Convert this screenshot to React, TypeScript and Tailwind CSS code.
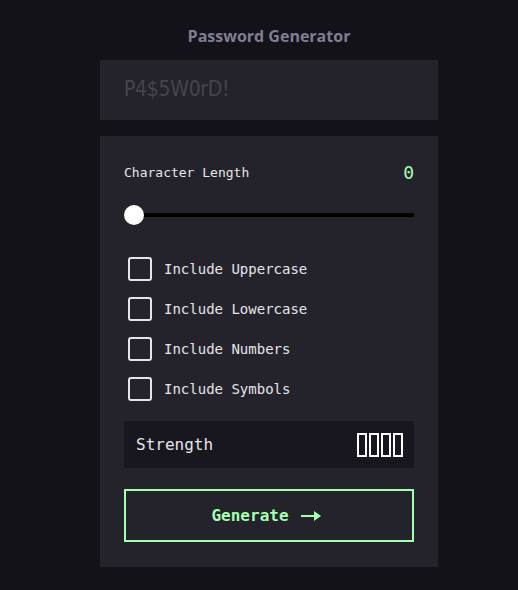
import React from "react";

const mono = { fontFamily: '"DejaVu Sans Mono", "Liberation Mono", monospace' };

function Checkbox({ label }: { label: string }) {
  return (
    <div className="flex items-center gap-3 h-6 pl-1">
      <div className="w-6 h-6 border-2 border-[#E6E5EA] rounded-[3px]" />
      <span className="text-[14px] text-[#E6E5EA]" style={mono}>{label}</span>
    </div>
  );
}

export default function App() {
  return (
    <div className="min-h-[590px] w-full bg-[#131219] flex flex-col items-center pt-[26px] pl-5">
      <h1
        className="text-[16px] font-bold text-[#817D92] leading-5"
        style={{ fontFamily: '"Open Sans", sans-serif' }}
      >
        Password Generator
      </h1>
      <div className="mt-[14px] w-[338px] h-[60px] bg-[#24232C] flex items-center px-6">
        <span
          className="text-[21px] text-[#45444F]"
          style={{ fontFamily: '"DejaVu Sans Condensed", "DejaVu Sans", sans-serif', letterSpacing: "-0.3px" }}
        >
          P4$5W0rD!
        </span>
      </div>
      <div className="mt-4 w-[338px] bg-[#24232C] px-6 pt-6 pb-[25px] flex flex-col">
        <div className="flex items-center justify-between h-6">
          <span className="text-[13px] text-[#E6E5EA] pt-[2px]" style={mono}>Character Length</span>
          <span className="text-[18px] text-[#A4FFAF]" style={mono}>0</span>
        </div>
        <div className="relative mt-[21px] h-5 flex items-center">
          <div className="w-full h-1 bg-black" />
          <div className="absolute left-0 top-0 w-5 h-5 rounded-full bg-white" />
        </div>
        <div className="mt-8 flex flex-col gap-4">
          <Checkbox label="Include Uppercase" />
          <Checkbox label="Include Lowercase" />
          <Checkbox label="Include Numbers" />
          <Checkbox label="Include Symbols" />
        </div>
        <div className="mt-5 h-[47px] bg-[#18171F] flex items-center justify-between pl-3 pr-[11px]">
          <span className="text-[16px] text-[#E6E5EA]" style={mono}>Strength</span>
          <div className="flex gap-[2px]">
            <div className="w-[10px] h-6 border-2 border-white" />
            <div className="w-[10px] h-6 border-2 border-white" />
            <div className="w-[10px] h-6 border-2 border-white" />
            <div className="w-[10px] h-6 border-2 border-white" />
          </div>
        </div>
        <div className="mt-[21px] h-[53px] border-2 border-[#A4FFAF] flex items-center justify-center gap-3 pr-[6px]">
          <span className="text-[16px] font-bold text-[#A4FFAF]" style={mono}>Generate</span>
          <svg width="20" height="10" viewBox="0 0 20 10">
            <rect x="0" y="4" width="14" height="2" fill="#A4FFAF" />
            <path d="M13 0 L20 5 L13 10 Z" fill="#A4FFAF" />
          </svg>
        </div>
      </div>
    </div>
  );
}
